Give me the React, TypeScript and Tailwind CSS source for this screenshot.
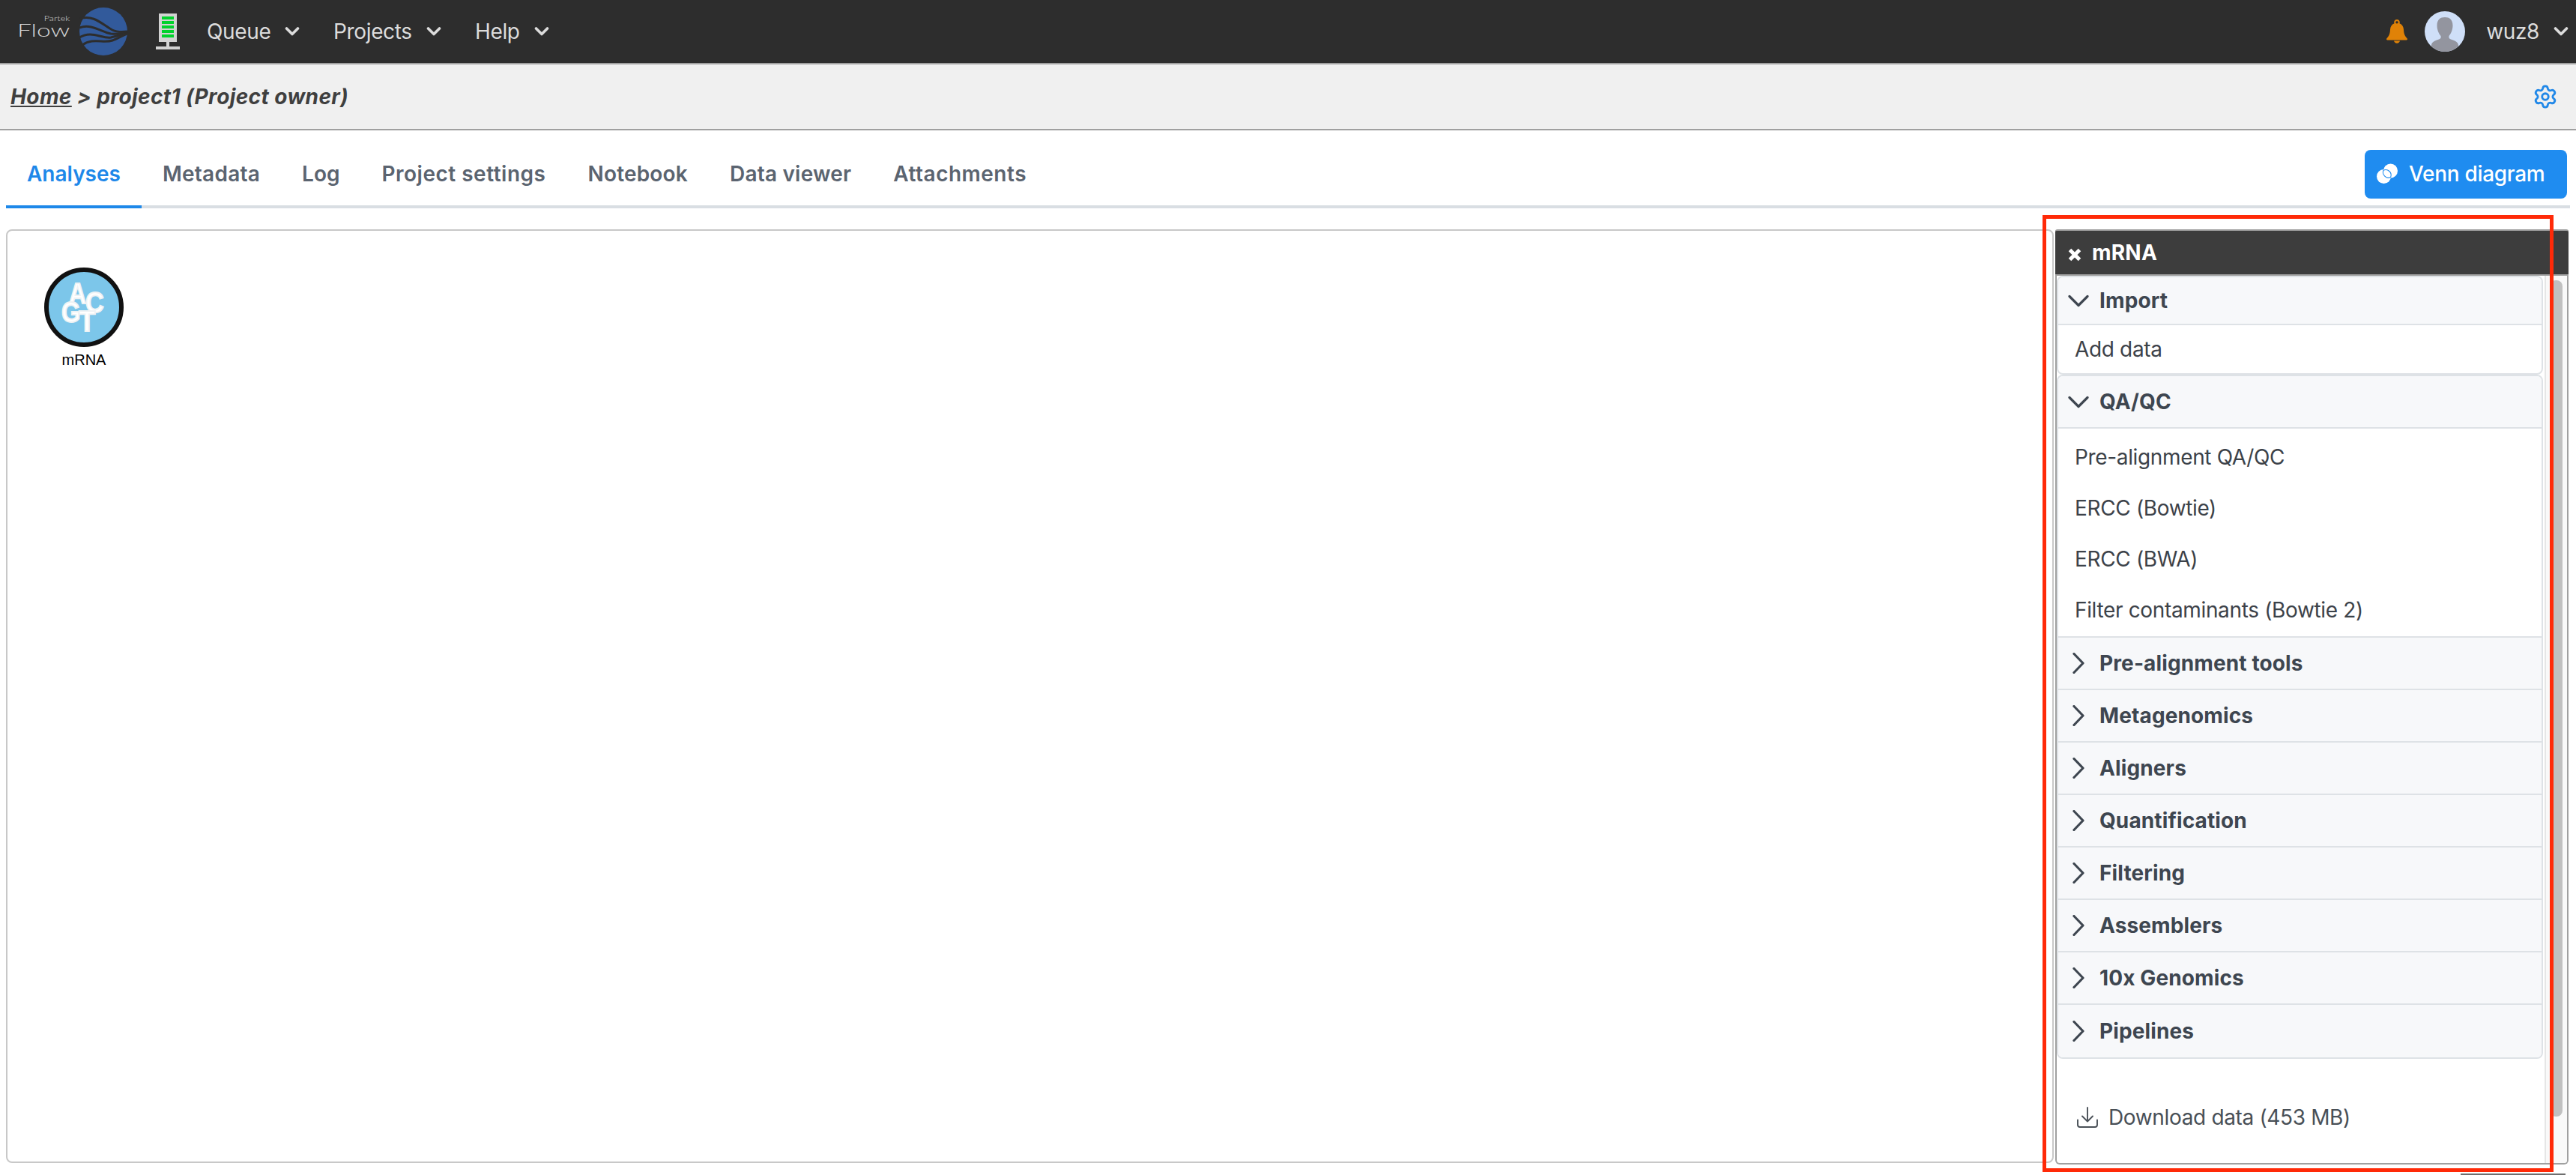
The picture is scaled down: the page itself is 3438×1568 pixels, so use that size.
import React from "react";
import { Settings } from "lucide-react";

function Chevron({ dir, className }: { dir: "down" | "right"; className?: string }) {
  return (
    <svg width="28" height="28" viewBox="0 0 28 28" fill="none" stroke="currentColor" strokeWidth="3.2" strokeLinecap="round" strokeLinejoin="round" className={className}>
      {dir === "down" ? <path d="M2 8.5 L14 20.5 L26 8.5" /> : <path d="M8 1.5 L20 14 L8 26.5" />}
    </svg>
  );
}

function NavChevron() {
  return (
    <svg width="20" height="14" viewBox="0 0 20 14" fill="none" stroke="currentColor" strokeWidth="3.6" strokeLinecap="round" strokeLinejoin="round">
      <path d="M2.5 3 L10 10.5 L17.5 3" />
    </svg>
  );
}

function NavItem({ label, width }: { label: string; width: string }) {
  return (
    <div className={`flex items-center gap-[19px] ${width}`}>
      <span>{label}</span>
      <NavChevron />
    </div>
  );
}

function Logo() {
  return (
    <div className="flex items-center">
      <div className="flex justify-end w-[71px] text-[#d4d4d4] font-['Lato',sans-serif] font-light tracking-normal">
        <div className="flex flex-col items-end origin-right scale-x-[1.4] mb-[15px]">
          <span className="text-[9px] leading-[9px] mb-[1px]">Partek</span>
          <span className="text-[24px] leading-[20px]">Flow</span>
        </div>
      </div>
      <svg width="64" height="64" viewBox="0 0 64 64" className="ml-[13px]">
        <ellipse cx="32" cy="32" rx="32" ry="32" fill="#325a9b" />
        <g fill="none" stroke="#2d2d2d" strokeWidth="3">
          <path d="M1 15 C18 9 30 22 44 30 C50 33 56 33 64 32" />
          <path d="M0 27 C16 21 30 33 42 35 C50 36 56 35 64 33" />
          <path d="M0 40 C16 30 30 42 42 40 C50 38 56 36 64 34" />
          <path d="M4 50 C18 40 32 48 44 44 C50 42 56 38 64 35" />
        </g>
      </svg>
    </div>
  );
}

function ServerIcon() {
  return (
    <svg width="32" height="48" viewBox="0 0 32 48" className="ml-[38px]">
      <rect x="4" y="0" width="24" height="38" fill="#d2d2d2" />
      <rect x="8" y="4" width="16" height="4" fill="#00d22b" />
      <rect x="8" y="10" width="16" height="4" fill="#00d22b" />
      <rect x="8" y="16" width="16" height="4" fill="#00d22b" />
      <rect x="8" y="22" width="16" height="4" fill="#00d22b" />
      <rect x="8" y="28" width="16" height="4" fill="#00d22b" />
      <rect x="14" y="38" width="4" height="6" fill="#d2d2d2" />
      <rect x="0" y="44" width="32" height="4" fill="#d2d2d2" />
    </svg>
  );
}

function Bell() {
  return (
    <svg width="28" height="32" viewBox="0 0 28 32">
      <path
        fillRule="evenodd"
        fill="#e08207"
        d="M14 0 C11.8 0 10.2 1.7 10.2 3.8 C10.2 4.3 10.3 4.8 10.5 5.2 C7 6.6 5.2 9.6 5 13.5 C4.7 19 3.6 22 0.4 25.2 C-0.3 26 0 27.4 1.3 27.4 L26.7 27.4 C28 27.4 28.3 26 27.6 25.2 C24.4 22 23.3 19 23 13.5 C22.8 9.6 21 6.6 17.5 5.2 C17.7 4.8 17.8 4.3 17.8 3.8 C17.8 1.7 16.2 0 14 0 Z M14 2.2 C15 2.2 15.7 2.9 15.7 3.8 C15.7 4.7 15 5.4 14 5.4 C13 5.4 12.3 4.7 12.3 3.8 C12.3 2.9 13 2.2 14 2.2 Z"
      />
      <path d="M10 28.6 L18 28.6 C17.6 30.6 16 31.8 14 31.8 C12 31.8 10.4 30.6 10 28.6 Z" fill="#e08207" />
    </svg>
  );
}

function Avatar() {
  return (
    <svg width="54" height="54" viewBox="0 0 54 54" className="ml-[23px]">
      <defs>
        <clipPath id="avatarClip">
          <circle cx="27" cy="27" r="27" />
        </clipPath>
      </defs>
      <circle cx="27" cy="27" r="27" fill="#cfdff8" />
      <g clipPath="url(#avatarClip)" fill="#93959f">
        <path d="M27 8 C33 8 37.5 11 37.5 19 C37.5 25 35 30 32.5 33 C32 35 32.5 36.5 35 37.5 C41 39.5 45 41 45 46 L45 54 L9 54 L9 46 C9 41 13 39.5 19 37.5 C21.5 36.5 22 35 21.5 33 C19 30 16.5 25 16.5 19 C16.5 11 21 8 27 8 Z" />
      </g>
    </svg>
  );
}

function VennIcon() {
  return (
    <svg width="28" height="28" viewBox="0 0 28 28" className="shrink-0">
      <circle cx="9.5" cy="17.5" r="9.5" fill="#fff" />
      <circle cx="18.5" cy="10" r="9.5" fill="#fff" />
      <path d="M9 9.2 C15 6.5 20.8 12.4 18.7 18.2 C12.8 21.5 6.6 14.8 9 9.2 Z" fill="#fff" stroke="#1f8cf0" strokeWidth="1.1" />
    </svg>
  );
}

function DownloadIcon() {
  return (
    <svg width="30" height="28" viewBox="0 0 30 28" fill="none" stroke="#495057" strokeWidth="1.9" strokeLinecap="round" strokeLinejoin="round" className="shrink-0">
      <path d="M15 1 V19" />
      <path d="M8 12.5 L15 19.5 L22 12.5" />
      <path d="M2 17.5 V24 C2 25.7 3.2 27 5 27 H25 C26.8 27 28 25.7 28 24 V17.5" />
    </svg>
  );
}

function MrnaNode() {
  return (
    <div className="absolute left-[49px] top-[49px] w-[106px] flex flex-col items-center tracking-normal">
      <svg width="106" height="106" viewBox="0 0 106 106">
        <circle cx="53" cy="53" r="50" fill="#7cc6ea" stroke="#111111" strokeWidth="6" />
        <g fill="#ffffff" stroke="#eef2f4" strokeWidth="1.8" style={{ fontFamily: "'Liberation Sans', sans-serif", fontWeight: 700, fontSize: "38px" }}>
          <text x="0" y="0" transform="translate(33 48) scale(0.84 1)">A</text>
          <text x="0" y="0" transform="translate(55 60) scale(0.9 1)">C</text>
          <text x="0" y="0" transform="translate(23 73) scale(0.86 1)">G</text>
          <text x="0" y="0" transform="translate(46 85) scale(0.96 1)">T</text>
        </g>
      </svg>
      <span className="font-['Liberation_Sans',sans-serif] text-[20px] leading-[24px] text-black mt-[5px]">mRNA</span>
    </div>
  );
}

function Header({ title, open, last }: { title: string; open?: boolean; last?: boolean }) {
  return (
    <div className={`flex items-center h-[70px] pl-[13px] gap-[14px] bg-[#f7f8fa] text-[#3e4650] font-bold tracking-[0.12px] border-[#dee2e6] ${last ? "" : "border-b-2"}`}>
      <Chevron dir={open ? "down" : "right"} />
      <span>{title}</span>
    </div>
  );
}

function Item({ label }: { label: string }) {
  return <div className="flex items-center h-[68px] pl-[22px] text-[#3c4249]">{label}</div>;
}

export default function App() {
  const collapsed = ["Pre-alignment tools", "Metagenomics", "Aligners", "Quantification", "Filtering", "Assemblers", "10x Genomics", "Pipelines"];
  const tabs = [
    { label: "Metadata", cls: "tracking-[0.25px]" },
    { label: "Log", cls: "tracking-normal" },
    { label: "Project settings", cls: "tracking-[0.5px]" },
    { label: "Notebook", cls: "tracking-[0.2px]" },
    { label: "Data viewer", cls: "tracking-[0.2px]" },
    { label: "Attachments", cls: "tracking-[0.5px]" },
  ];
  return (
    <div className="relative w-full h-[1568px] overflow-hidden bg-white font-['Inter',sans-serif] text-[28px] leading-[40px] tracking-[-0.35px]">
      {/* top bar */}
      <div className="flex items-center h-[86px] pl-[22px] pr-[10px] bg-[#2d2d2d] border-b-2 border-[#a0a0a0] text-[#dcdcdc]">
        <Logo />
        <ServerIcon />
        <div className="flex items-center ml-[36px]">
          <NavItem label="Queue" width="w-[169px]" />
          <NavItem label="Projects" width="w-[189px]" />
          <NavItem label="Help" width="w-auto" />
        </div>
        <div className="flex items-center ml-auto">
          <Bell />
          <Avatar />
          <span className="ml-[28px]">wuz8</span>
          <div className="ml-[19px]">
            <NavChevron />
          </div>
        </div>
      </div>

      {/* breadcrumb */}
      <div className="flex items-center justify-between h-[88px] pl-[14px] pr-[24px] bg-[#f0f0f0] border-b-2 border-[#a0a0a0] text-[#3f3f3f] font-bold italic tracking-[0.4px]">
        <div>
          <span className="underline">Home</span> &gt; project1 (Project owner)
        </div>
        <Settings size={34} strokeWidth={2} className="text-[#2188e8]" />
      </div>

      {/* tabs */}
      <div className="flex mt-[16px] ml-[8px] mr-[8px] border-b-4 border-[#d9dee3] font-semibold text-[#5b6470] tracking-normal">
        <div className="flex items-center h-[88px] -mb-[4px] px-[28px] border-b-4 border-[#1e88e9] text-[#1e88e9]">Analyses</div>
        {tabs.map((t) => (
          <div key={t.label} className={`flex items-center h-[84px] px-[28px] ${t.cls}`}>
            {t.label}
          </div>
        ))}
        <div className="flex items-center self-center gap-[15px] w-[270px] h-[65px] ml-auto mr-[4px] pl-[16px] rounded-[8px] bg-[#1f8cf0] text-white font-medium tracking-[-0.3px]">
          <VennIcon />
          <span>Venn diagram</span>
        </div>
      </div>

      {/* workspace */}
      <div className="flex items-start mt-[28px] ml-[8px] mr-[10px] gap-[2px]">
        <div className="relative flex-1 h-[1246px] border-2 border-[#c8c8c8] rounded-[8px]">
          <MrnaNode />
        </div>

        <div className="flex flex-col w-[685px] h-[1248px]">
          <div className="flex items-center h-[62px] pl-[17px] gap-[14px] bg-[#3d3d3d] border-y-2 border-[#a0a0a0] rounded-t-[3px] text-white font-bold tracking-[0.2px]">
            <svg width="18" height="18" viewBox="0 0 18 18" fill="none" stroke="#fff" strokeWidth="5" className="shrink-0 mt-[5px]">
              <path d="M2.5 2.5 L15.5 15.5 M15.5 2.5 L2.5 15.5" />
            </svg>
            <span className="-mt-[1px]">mRNA</span>
          </div>
          <div className="flex flex-1 min-h-0 border-x-2 border-b-2 border-[#a0a0a0] rounded-b-[6px] overflow-hidden">
            <div className="flex-1 min-w-0 flex flex-col pr-[2px]">
              <div className="border-2 border-[#dee2e6] rounded-[8px] overflow-hidden">
                <div className="flex items-center h-[64px] pl-[13px] gap-[14px] bg-[#f7f8fa] text-[#3e4650] font-bold tracking-[0.12px] border-b-2 border-[#dee2e6]">
                  <Chevron dir="down" />
                  <span>Import</span>
                </div>
                <div className="flex items-center h-[64px] pl-[22px] text-[#3c4249]">Add data</div>
              </div>
              <div className="border-2 border-[#dee2e6] rounded-[8px] overflow-hidden">
                <Header title="QA/QC" open />
                <div className="pt-[4px] pb-[1px] border-b-2 border-[#dee2e6]">
                  <Item label="Pre-alignment QA/QC" />
                  <Item label="ERCC (Bowtie)" />
                  <Item label="ERCC (BWA)" />
                  <Item label="Filter contaminants (Bowtie 2)" />
                </div>
                {collapsed.map((c, i) => (
                  <Header key={c} title={c} last={i === collapsed.length - 1} />
                ))}
              </div>
              <div className="flex items-center h-[60px] mt-[48px] pl-[26px] gap-[13px] text-[#495057]">
                <DownloadIcon />
                <span>Download data (453 MB)</span>
              </div>
            </div>
            <div className="w-[30px] shrink-0 border-l-2 border-[#e6e6e6] bg-[#f9f9f9]">
              <div className="w-[17px] h-[1116px] mt-[6px] ml-[5px] rounded-[8px] bg-[#c0c0c0]" />
            </div>
          </div>
        </div>
      </div>

      <div className="w-[140px] h-[2px] mt-[12px] ml-auto mr-[14px] bg-[#6e6e6e]" />

      {/* red annotation */}
      <div className="absolute left-[2726px] top-[287px] w-[682px] h-[1277px] border-[5px] border-[#ff2a08] pointer-events-none" />
    </div>
  );
}
